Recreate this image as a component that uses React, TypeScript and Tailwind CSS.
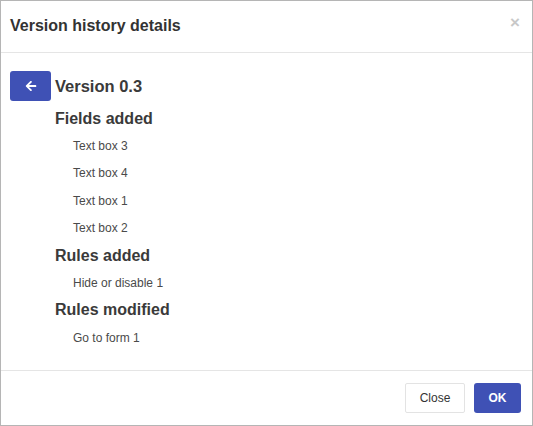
import { FaArrowLeft } from 'react-icons/fa';

const sections = [
  { title: 'Fields added', items: ['Text box 3', 'Text box 4', 'Text box 1', 'Text box 2'] },
  { title: 'Rules added', items: ['Hide or disable 1'] },
  { title: 'Rules modified', items: ['Go to form 1'] },
];

const App = () => {
  return (
    <div className="w-[533px] h-[426px] bg-white font-['Liberation_Sans',Arial,sans-serif] text-[#333]">
      <div className="h-full flex flex-col border border-[#b5b5b5]">
        <div className="h-[52px] shrink-0 flex items-center justify-between pl-[9px] pr-[12px] border-b border-[#e5e5e5]">
          <h1 className="text-[16px] font-bold text-[#333] -mt-[2px]">Version history details</h1>
          <span className="text-[#c8c8c8] text-[17px] font-bold leading-none -mt-[8px]">×</span>
        </div>

        <div className="flex-1 pt-[18px] pl-[9px]">
          <div className="flex items-center gap-[4px]">
            <button className="w-[41px] h-[30px] rounded-[3px] bg-[#3f51b5] flex items-center justify-center">
              <FaArrowLeft className="w-[12px] h-[12px] text-white" />
            </button>
            <h2 className="text-[16.5px] font-bold text-[#3a3a3a]">Version 0.3</h2>
          </div>
          <div className="pl-[45px] mt-[4px]">
            {sections.map((s) => (
              <div key={s.title}>
                <h3 className="text-[16px] font-bold text-[#3a3a3a] h-[27.4px] flex items-center">{s.title}</h3>
                {s.items.map((it) => (
                  <p key={it} className="pl-[18px] text-[12px] text-[#4a4a4a] h-[27.4px] flex items-center">
                    {it}
                  </p>
                ))}
              </div>
            ))}
          </div>
        </div>

        <div className="h-[55px] shrink-0 border-t border-[#e5e5e5] flex items-center justify-end gap-[9px] pr-[11px]">
          <button className="w-[60px] h-[30px] rounded-[2px] border border-[#e3e3e3] bg-white text-[12px] text-[#333]">
            Close
          </button>
          <button className="w-[47px] h-[30px] rounded-[3px] bg-[#3f51b5] text-white text-[12px] font-bold">
            OK
          </button>
        </div>
      </div>
    </div>
  );
};

export default App;
